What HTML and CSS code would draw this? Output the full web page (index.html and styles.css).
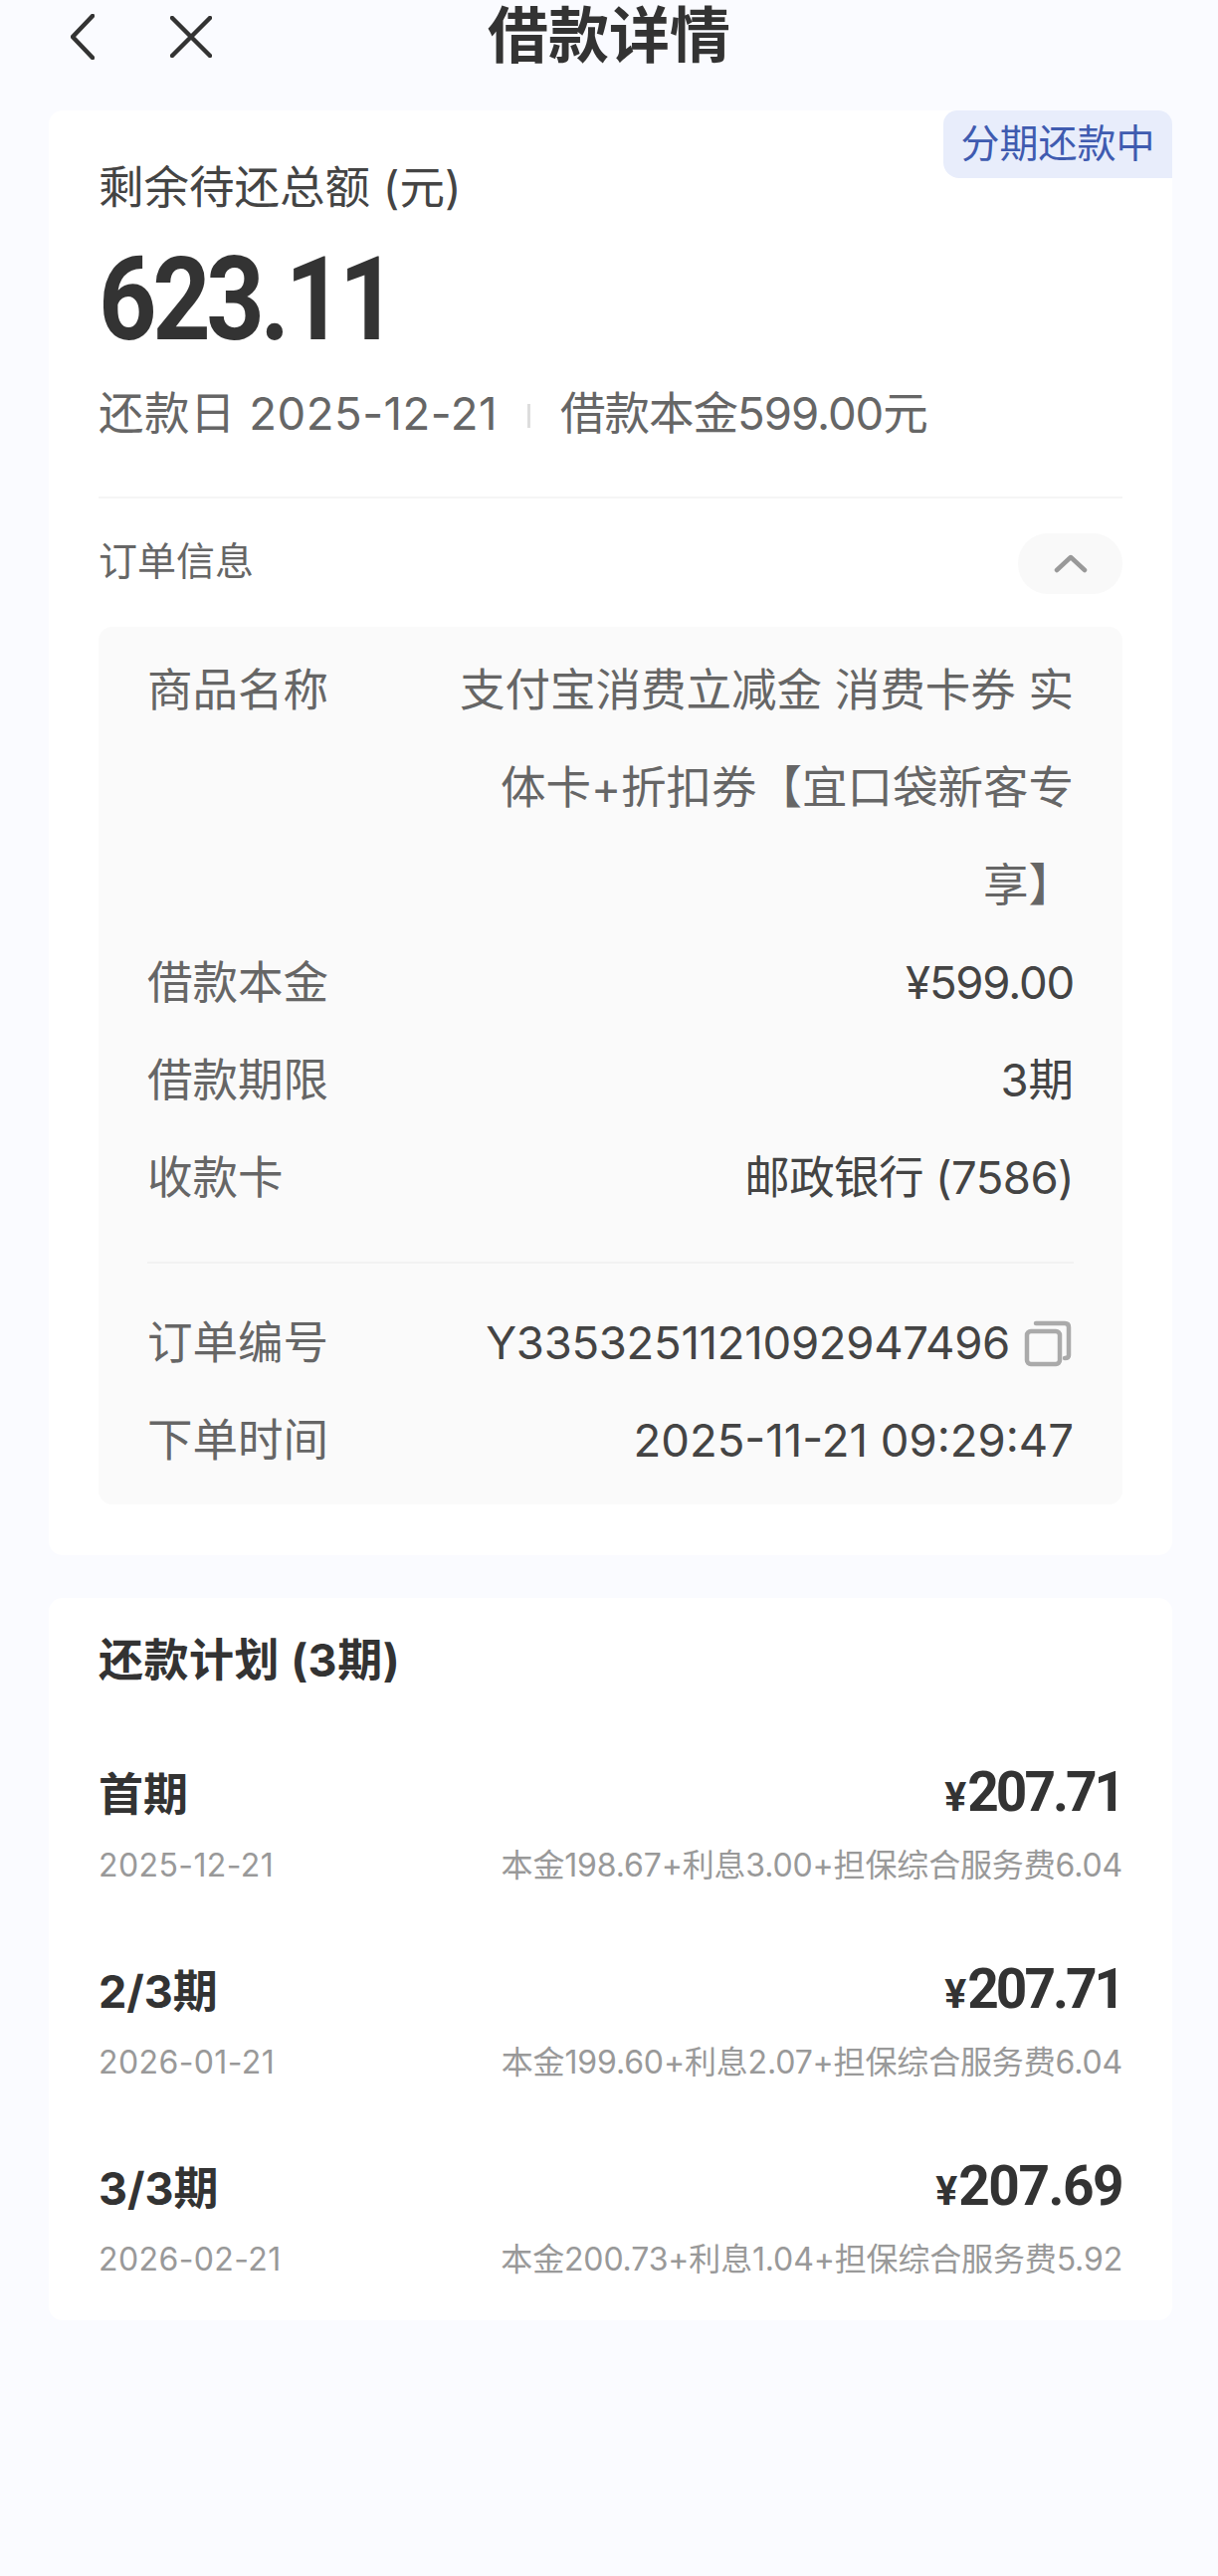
FILE: index.html
```html
<!DOCTYPE html>
<html lang="zh-CN">
  <head>
    <meta charset="UTF-8" />
    <meta name="viewport" content="width=device-width, initial-scale=1.0" />
    <title>借款详情</title>
    <link rel="stylesheet" href="styles.css">
  </head>
  <body>
    <header class="topbar">
      <div class="nav-icons">
        <svg class="icon-back" width="24" height="46" viewBox="0 0 24 46">
          <path d="M22 2 L2 23 L22 44" />
        </svg>
        <svg class="icon-close" width="42" height="42" viewBox="0 0 42 42">
          <path d="M2 2 L40 40 M40 2 L2 40" />
        </svg>
      </div>
      <h1 class="page-title">借款详情</h1>
    </header>

    <section class="card summary">
      <span class="badge">分期还款中</span>
      <p class="remain-label">剩余待还总额 (元)</p>
      <p class="remain-amount">623.11</p>
      <p class="remain-meta">
        <span class="due-date">还款日 2025-12-21</span><i class="sep"></i><span class="principal">借款本金599.00元</span>
      </p>

      <div class="order-head">
        <span class="order-title">订单信息</span>
        <span class="collapse-btn">
          <svg width="34" height="20" viewBox="0 0 34 20">
            <path d="M3 17 L17 4 L31 17" />
          </svg>
        </span>
      </div>

      <div class="order-panel">
        <div class="row">
          <span class="row-label">商品名称</span>
          <span class="row-value wrap">支付宝消费立减金 消费卡券 实体卡+折扣券【宜口袋新客专享】</span>
        </div>
        <div class="row">
          <span class="row-label">借款本金</span>
          <span class="row-value price">¥599.00</span>
        </div>
        <div class="row">
          <span class="row-label">借款期限</span>
          <span class="row-value">3期</span>
        </div>
        <div class="row">
          <span class="row-label">收款卡</span>
          <span class="row-value bank">邮政银行 (7586)</span>
        </div>
        <hr class="panel-line" />
        <div class="row">
          <span class="row-label">订单编号</span>
          <span class="row-value with-icon">Y3353251121092947496
            <svg class="icon-copy" width="48" height="48" viewBox="0 0 48 48">
              <rect x="3" y="12" width="33" height="33" rx="4" />
              <path d="M12 4 H41 Q45 4 45 8 V36 Q45 39 41 39" />
            </svg>
          </span>
        </div>
        <div class="row">
          <span class="row-label">下单时间</span>
          <span class="row-value">2025-11-21 09:29:47</span>
        </div>
      </div>
    </section>

    <section class="card plan">
      <h2 class="plan-title">还款计划 (3期)</h2>

      <div class="plan-item">
        <div class="plan-main">
          <span class="plan-name">首期</span>
          <span class="plan-money tight"><small>¥</small>207.71</span>
        </div>
        <div class="plan-sub">
          <span class="plan-date">2025-12-21</span>
          <span class="plan-detail">本金198.67+利息3.00+担保综合服务费6.04</span>
        </div>
      </div>

      <div class="plan-item">
        <div class="plan-main">
          <span class="plan-name">2/3期</span>
          <span class="plan-money tight"><small>¥</small>207.71</span>
        </div>
        <div class="plan-sub">
          <span class="plan-date">2026-01-21</span>
          <span class="plan-detail">本金199.60+利息2.07+担保综合服务费6.04</span>
        </div>
      </div>

      <div class="plan-item">
        <div class="plan-main">
          <span class="plan-name">3/3期</span>
          <span class="plan-money"><small>¥</small>207.69</span>
        </div>
        <div class="plan-sub">
          <span class="plan-date">2026-02-21</span>
          <span class="plan-detail">本金200.73+利息1.04+担保综合服务费5.92</span>
        </div>
      </div>
    </section>
  </body>
</html>
```

FILE: styles.css
```css
* {
  margin: 0;
  padding: 0;
  box-sizing: border-box;
}
body {
  background-color: #fafbff;
  color: #333;
  font-family: Inter, "Noto Sans CJK SC", sans-serif;
  padding: 0 46px 0 49px;
}
svg path,
svg rect {
  fill: none;
  stroke-linecap: round;
  stroke-linejoin: round;
}

/* top bar */
.topbar {
  display: flex;
  justify-content: center;
  align-items: center;
  height: 72px;
  margin-bottom: 39px;
  position: relative;
}
.nav-icons {
  position: absolute;
  left: 22px;
  top: 14px;
  display: flex;
  align-items: center;
  column-gap: 76px;
}
.icon-back path,
.icon-close path {
  stroke: #333;
  stroke-width: 4.5;
}
.page-title {
  font-size: 61px;
  line-height: 78px;
  font-weight: 700;
  margin-left: -3px;
}

/* cards */
.card {
  background-color: #fff;
  border-radius: 14px;
  padding: 0 50px;
  position: relative;
}
.summary {
  height: 1452px;
  padding-top: 46px;
  margin-bottom: 43px;
}
.badge {
  position: absolute;
  top: 0;
  right: 0;
  width: 230px;
  height: 68px;
  background-color: #e8edfb;
  color: #3f5bb0;
  font-size: 39px;
  line-height: 65px;
  text-align: center;
  border-radius: 14px 14px 0 16px;
}
.remain-label {
  font-size: 45.5px;
  line-height: 64px;
  color: #444;
}
.remain-amount {
  font-family: Roboto, sans-serif;
  font-size: 116px;
  line-height: 130px;
  font-weight: 700;
  letter-spacing: -5px;
  margin-top: 15px;
  transform: scaleX(0.88);
  transform-origin: left center;
}
.remain-meta {
  display: flex;
  align-items: center;
  font-size: 45.5px;
  line-height: 62px;
  color: #666;
  margin-top: 19px;
  padding-bottom: 52px;
  border-bottom: 2px solid #f5f5f5;
}
.due-date {
  letter-spacing: 0.5px;
}
.principal {
  letter-spacing: -1px;
}
.sep {
  display: block;
  width: 3px;
  height: 24px;
  background-color: #ddd;
  margin: 4px 30px 0 30px;
}

.order-head {
  display: flex;
  justify-content: space-between;
  align-items: center;
  font-size: 39px;
  color: #666;
  margin-top: 34px;
  height: 62px;
}
.order-title {
  margin-top: -10px;
}
.collapse-btn {
  display: flex;
  justify-content: center;
  align-items: center;
  width: 105px;
  height: 61px;
  border-radius: 30px;
  background-color: #f9f9f9;
}
.collapse-btn path {
  stroke: #999;
  stroke-width: 4.5;
}

/* order panel */
.order-panel {
  background-color: #fafafa;
  border-radius: 14px;
  margin-top: 33px;
  padding: 15px 49px 0 49px;
  height: 882px;
}
.row {
  display: flex;
  justify-content: space-between;
  font-size: 45.5px;
  line-height: 98px;
}
.row-label {
  color: #666;
  flex-shrink: 0;
}
.row-value {
  color: #444;
  text-align: right;
}
.row-value.wrap {
  width: 625px;
  color: #666;
}
.row-value.price {
  letter-spacing: -1.2px;
}
.row-value.bank {
  letter-spacing: -0.6px;
}
.row-value.with-icon {
  display: flex;
  align-items: center;
  column-gap: 14px;
  letter-spacing: -0.3px;
}
.icon-copy {
  margin-right: 2px;
}
.icon-copy rect,
.icon-copy path {
  stroke: #aaa;
  stroke-width: 4.5;
}
.panel-line {
  border: 0;
  border-top: 2px solid #f2f2f2;
  margin: 35px 0 31px;
}

/* repayment plan */
.plan {
  height: 726px;
  padding-top: 32px;
}
.plan-title {
  font-size: 45px;
  line-height: 62px;
  font-weight: 700;
  letter-spacing: 0.5px;
  margin-bottom: 62px;
}
.plan-item {
  height: 198px;
}
.plan-main {
  display: flex;
  justify-content: space-between;
  align-items: center;
  height: 76px;
}
.plan-name {
  font-size: 45px;
  font-weight: 700;
}
.plan-money {
  font-family: Roboto, sans-serif;
  font-size: 55px;
  line-height: 80px;
  font-weight: 700;
  letter-spacing: -1.5px;
  margin-top: 6px;
}
.plan-money.tight {
  letter-spacing: -3px;
}
.plan-money small {
  font-size: 41px;
  letter-spacing: 0;
  margin-right: 1px;
}
.plan-sub {
  display: flex;
  justify-content: space-between;
  font-size: 32px;
  line-height: 48px;
  color: #999;
  margin-top: 13px;
}
.plan-date {
  letter-spacing: 0.4px;
}
.plan-detail {
  letter-spacing: -0.15px;
}
```
